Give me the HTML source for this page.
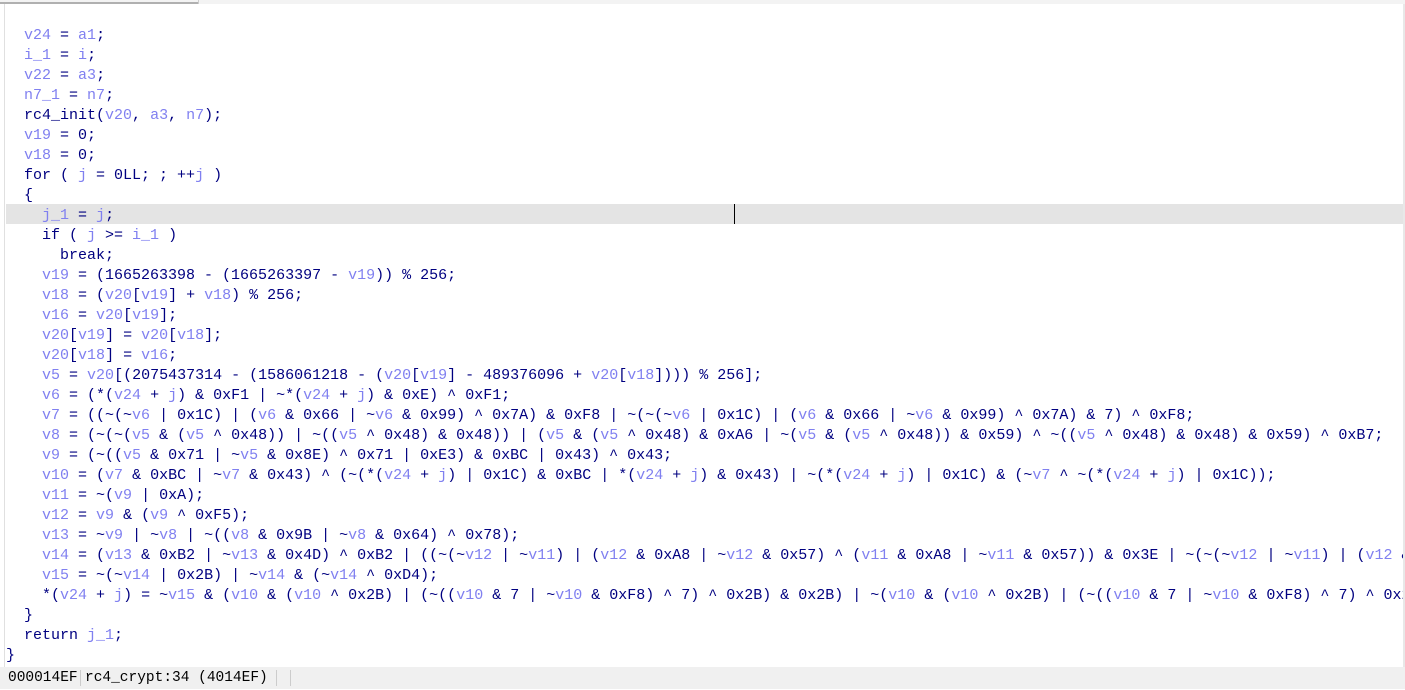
<!DOCTYPE html>
<html><head><meta charset="utf-8"><style>
html,body{margin:0;padding:0;width:1405px;height:689px;overflow:hidden;background:#fff;}
.top{position:absolute;left:0;top:0;width:1405px;height:4px;background:#f3f3f3;}
.top .t1{position:absolute;left:0;top:2px;width:198px;height:2px;background:#b0b0b0;}
.top .t2{position:absolute;left:198px;top:0;width:1px;height:4px;background:#ccc;}
.lb{position:absolute;left:4px;top:4px;width:1px;height:663px;background:#e0e0e0;}
.rb{position:absolute;left:1403px;top:4px;width:2px;height:663px;background:#e8e8e8;}
.code{position:absolute;left:6px;top:24px;width:1397px;height:643px;overflow:hidden;font-family:"Liberation Mono",monospace;font-size:15px;color:#000080;}
.l{height:20px;line-height:24px;white-space:pre;overflow:visible;}
.hl{background:#e4e4e4;}
.v{color:#8080f0;}
.cur{position:absolute;left:728px;top:180px;width:1px;height:20px;background:#000;}
.sb{position:absolute;left:0;top:667px;width:1405px;height:22px;background:#f0f0f0;font-family:"Liberation Mono",monospace;font-size:14.5px;line-height:23px;color:#000;}
.sb span{position:absolute;top:0;}
.sep{position:absolute;top:3px;width:1px;height:16px;background:#ccc;}
</style></head><body>
<div class="top"><div class="t1"></div><div class="t2"></div></div>
<div class="lb"></div><div class="rb"></div>
<div class="code">
<div class="l">  <span class="v">v24</span> = <span class="v">a1</span>;</div>
<div class="l">  <span class="v">i_1</span> = <span class="v">i</span>;</div>
<div class="l">  <span class="v">v22</span> = <span class="v">a3</span>;</div>
<div class="l">  <span class="v">n7_1</span> = <span class="v">n7</span>;</div>
<div class="l">  rc4_init(<span class="v">v20</span>, <span class="v">a3</span>, <span class="v">n7</span>);</div>
<div class="l">  <span class="v">v19</span> = 0;</div>
<div class="l">  <span class="v">v18</span> = 0;</div>
<div class="l">  for ( <span class="v">j</span> = 0LL; ; ++<span class="v">j</span> )</div>
<div class="l">  {</div>
<div class="l hl">    <span class="v">j_1</span> = <span class="v">j</span>;</div>
<div class="l">    if ( <span class="v">j</span> &gt;= <span class="v">i_1</span> )</div>
<div class="l">      break;</div>
<div class="l">    <span class="v">v19</span> = (1665263398 - (1665263397 - <span class="v">v19</span>)) % 256;</div>
<div class="l">    <span class="v">v18</span> = (<span class="v">v20</span>[<span class="v">v19</span>] + <span class="v">v18</span>) % 256;</div>
<div class="l">    <span class="v">v16</span> = <span class="v">v20</span>[<span class="v">v19</span>];</div>
<div class="l">    <span class="v">v20</span>[<span class="v">v19</span>] = <span class="v">v20</span>[<span class="v">v18</span>];</div>
<div class="l">    <span class="v">v20</span>[<span class="v">v18</span>] = <span class="v">v16</span>;</div>
<div class="l">    <span class="v">v5</span> = <span class="v">v20</span>[(2075437314 - (1586061218 - (<span class="v">v20</span>[<span class="v">v19</span>] - 489376096 + <span class="v">v20</span>[<span class="v">v18</span>]))) % 256];</div>
<div class="l">    <span class="v">v6</span> = (*(<span class="v">v24</span> + <span class="v">j</span>) &amp; 0xF1 | ~*(<span class="v">v24</span> + <span class="v">j</span>) &amp; 0xE) ^ 0xF1;</div>
<div class="l">    <span class="v">v7</span> = ((~(~<span class="v">v6</span> | 0x1C) | (<span class="v">v6</span> &amp; 0x66 | ~<span class="v">v6</span> &amp; 0x99) ^ 0x7A) &amp; 0xF8 | ~(~(~<span class="v">v6</span> | 0x1C) | (<span class="v">v6</span> &amp; 0x66 | ~<span class="v">v6</span> &amp; 0x99) ^ 0x7A) &amp; 7) ^ 0xF8;</div>
<div class="l">    <span class="v">v8</span> = (~(~(<span class="v">v5</span> &amp; (<span class="v">v5</span> ^ 0x48)) | ~((<span class="v">v5</span> ^ 0x48) &amp; 0x48)) | (<span class="v">v5</span> &amp; (<span class="v">v5</span> ^ 0x48) &amp; 0xA6 | ~(<span class="v">v5</span> &amp; (<span class="v">v5</span> ^ 0x48)) &amp; 0x59) ^ ~((<span class="v">v5</span> ^ 0x48) &amp; 0x48) &amp; 0x59) ^ 0xB7;</div>
<div class="l">    <span class="v">v9</span> = (~((<span class="v">v5</span> &amp; 0x71 | ~<span class="v">v5</span> &amp; 0x8E) ^ 0x71 | 0xE3) &amp; 0xBC | 0x43) ^ 0x43;</div>
<div class="l">    <span class="v">v10</span> = (<span class="v">v7</span> &amp; 0xBC | ~<span class="v">v7</span> &amp; 0x43) ^ (~(*(<span class="v">v24</span> + <span class="v">j</span>) | 0x1C) &amp; 0xBC | *(<span class="v">v24</span> + <span class="v">j</span>) &amp; 0x43) | ~(*(<span class="v">v24</span> + <span class="v">j</span>) | 0x1C) &amp; (~<span class="v">v7</span> ^ ~(*(<span class="v">v24</span> + <span class="v">j</span>) | 0x1C));</div>
<div class="l">    <span class="v">v11</span> = ~(<span class="v">v9</span> | 0xA);</div>
<div class="l">    <span class="v">v12</span> = <span class="v">v9</span> &amp; (<span class="v">v9</span> ^ 0xF5);</div>
<div class="l">    <span class="v">v13</span> = ~<span class="v">v9</span> | ~<span class="v">v8</span> | ~((<span class="v">v8</span> &amp; 0x9B | ~<span class="v">v8</span> &amp; 0x64) ^ 0x78);</div>
<div class="l">    <span class="v">v14</span> = (<span class="v">v13</span> &amp; 0xB2 | ~<span class="v">v13</span> &amp; 0x4D) ^ 0xB2 | ((~(~<span class="v">v12</span> | ~<span class="v">v11</span>) | (<span class="v">v12</span> &amp; 0xA8 | ~<span class="v">v12</span> &amp; 0x57) ^ (<span class="v">v11</span> &amp; 0xA8 | ~<span class="v">v11</span> &amp; 0x57)) &amp; 0x3E | ~(~(~<span class="v">v12</span> | ~<span class="v">v11</span>) | (<span class="v">v12</span> &amp; 0xA8));</div>
<div class="l">    <span class="v">v15</span> = ~(~<span class="v">v14</span> | 0x2B) | ~<span class="v">v14</span> &amp; (~<span class="v">v14</span> ^ 0xD4);</div>
<div class="l">    *(<span class="v">v24</span> + <span class="v">j</span>) = ~<span class="v">v15</span> &amp; (<span class="v">v10</span> &amp; (<span class="v">v10</span> ^ 0x2B) | (~((<span class="v">v10</span> &amp; 7 | ~<span class="v">v10</span> &amp; 0xF8) ^ 7) ^ 0x2B) &amp; 0x2B) | ~(<span class="v">v10</span> &amp; (<span class="v">v10</span> ^ 0x2B) | (~((<span class="v">v10</span> &amp; 7 | ~<span class="v">v10</span> &amp; 0xF8) ^ 7) ^ 0x2B));</div>
<div class="l">  }</div>
<div class="l">  return <span class="v">j_1</span>;</div>
<div class="l">}</div>
<div class="cur"></div>
</div>
<div class="sb"><span style="left:8px">000014EF</span><div class="sep" style="left:80px"></div><span style="left:85px">rc4_crypt:34 (4014EF)</span><div class="sep" style="left:276px"></div><div class="sep" style="left:290px"></div></div>
</body></html>
